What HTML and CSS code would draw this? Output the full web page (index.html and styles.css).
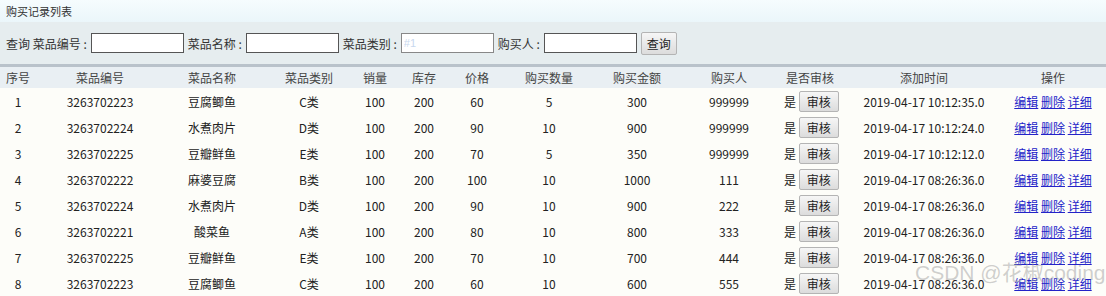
FILE: index.html
```html
<!DOCTYPE html>
<html lang="zh-CN">
<head>
    <meta charset="UTF-8">
    <title>购买记录列表</title>
    <link rel="stylesheet" href="styles.css">
</head>
<body>

    <!-- 标题 -->
    <div class="title">购买记录列表</div>

    <!-- 查询条件 -->
    <form class="search">
        <span>查询 菜品编号 :</span><input type="text">
        <span>菜品名称 :</span><input type="text">
        <span>菜品类别 :</span><input type="text" class="faint" value="#1">
        <span>购买人 :</span><input type="text">
        <button type="button" class="btn">查询</button>
    </form>

    <!-- 记录列表 -->
    <table class="list">
        <colgroup>
            <col style="width:36px"><col style="width:128px"><col style="width:96px"><col style="width:98px">
            <col style="width:34px"><col style="width:64px"><col style="width:42px"><col style="width:102px">
            <col style="width:74px"><col style="width:110px"><col style="width:52px"><col style="width:176px">
            <col>
        </colgroup>
        <thead>
            <tr>
                <th>序号</th><th>菜品编号</th><th>菜品名称</th><th>菜品类别</th><th>销量</th><th>库存</th>
                <th>价格</th><th>购买数量</th><th>购买金额</th><th>购买人</th><th>是否审核</th><th>添加时间</th><th class="op">操作</th>
            </tr>
        </thead>
        <tbody id="rows"></tbody>
    </table>

    <div class="mark">CSDN @花椒coding</div>

    <script>
        const records = [
            [1, '3263702223', '豆腐鲫鱼', 'C类', 100, 200, 60, 5, 300, '999999', '2019-04-17 10:12:35.0'],
            [2, '3263702224', '水煮肉片', 'D类', 100, 200, 90, 10, 900, '999999', '2019-04-17 10:12:24.0'],
            [3, '3263702225', '豆瓣鲜鱼', 'E类', 100, 200, 70, 5, 350, '999999', '2019-04-17 10:12:12.0'],
            [4, '3263702222', '麻婆豆腐', 'B类', 100, 200, 100, 10, 1000, '111', '2019-04-17 08:26:36.0'],
            [5, '3263702224', '水煮肉片', 'D类', 100, 200, 90, 10, 900, '222', '2019-04-17 08:26:36.0'],
            [6, '3263702221', '酸菜鱼', 'A类', 100, 200, 80, 10, 800, '333', '2019-04-17 08:26:36.0'],
            [7, '3263702225', '豆瓣鲜鱼', 'E类', 100, 200, 70, 10, 700, '444', '2019-04-17 08:26:36.0'],
            [8, '3263702223', '豆腐鲫鱼', 'C类', 100, 200, 60, 10, 600, '555', '2019-04-17 08:26:36.0']
        ];

        const tbody = document.getElementById('rows');
        records.forEach(r => {
            const tr = document.createElement('tr');
            const cells = r.slice(0, 10).map(v => `<td>${v}</td>`).join('');
            tr.innerHTML = cells +
                `<td class="audit">是 <button type="button" class="btn">审核</button></td>` +
                `<td>${r[10]}</td>` +
                `<td class="op"><a href="#">编辑</a> <a href="#">删除</a> <a href="#">详细</a></td>`;
            tbody.appendChild(tr);
        });
    </script>

</body>
</html>
```

FILE: styles.css
```css
html {
    overflow: hidden;
}

body {
    margin: 0;
    font-family: "Noto Sans CJK SC", "Liberation Sans", sans-serif;
    font-size: 12px;
    color: #333;
    background-color: #fff;
    width: 1106px;
    position: relative;
    overflow: hidden;
}

/* 标题栏 */
.title {
    height: 22px;
    line-height: 22px;
    padding-left: 6px;
    font-size: 11px;
    background: linear-gradient(#f6fcfe, #ebf6fa);
}

/* 查询栏 */
.search {
    height: 42px;
    margin: 0;
    padding-left: 6px;
    display: flex;
    align-items: center;
    background-color: #e6edef;
    border-bottom: 3px solid #b9c2ca;
}

.search span {
    white-space: nowrap;
    margin-right: 4px;
}

.search input {
    width: 87px;
    height: 16px;
    padding: 1px 2px;
    margin: 0 4px 0 0;
    border: 1px solid #555;
    background: #fff;
    font-size: 11px;
}

.search input.faint {
    color: #c8d8ee;
    border-color: #888;
}

.btn {
    font-family: inherit;
    font-size: 12px;
    color: #222;
    padding: 0 7px;
    height: 22px;
    border: 1px solid #b4b4b4;
    border-radius: 2px;
    background: linear-gradient(#f6f6f6, #dcdcdc);
}

.search .btn {
    height: 23px;
    padding: 0 5px;
}

/* 列表 */
.list {
    width: 1106px;
    border-collapse: collapse;
    table-layout: fixed;
    border-bottom: 1px solid #c4ccd2;
}

.list th {
    height: 21px;
    font-weight: normal;
    color: #444;
    background-color: #e9eff3;
    text-align: center;
    padding: 0;
}

.list td {
    height: 26px;
    padding: 0;
    text-align: center;
    white-space: nowrap;
    color: #222;
    background-color: #fdfdf9;
}

.list td.audit {
    text-align: left;
}

.list .btn {
    height: 21px;
    padding: 0 7px;
}

.list .op {
    padding-right: 12px;
}

.list a {
    color: #2323c8;
}

/* 水印 */
.mark {
    position: absolute;
    left: 915px;
    top: 261px;
    font-size: 21px;
    line-height: 24px;
    color: rgba(150, 150, 150, 0.45);
    font-family: "Liberation Sans", "Noto Sans CJK SC", sans-serif;
    white-space: nowrap;
}
```
